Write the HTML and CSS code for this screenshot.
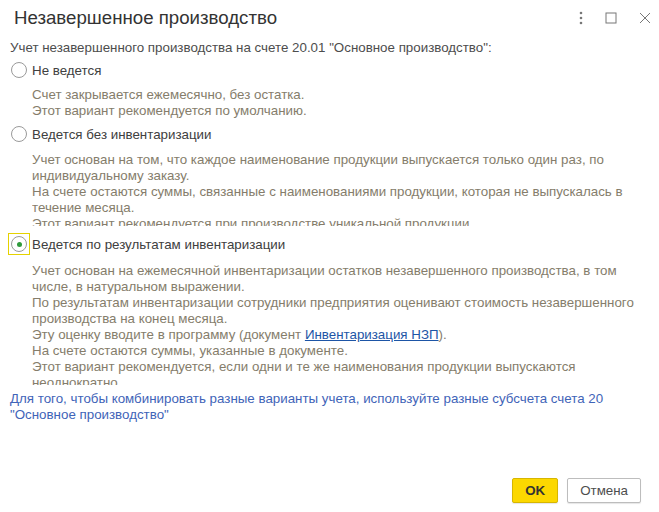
FILE: index.html
```html
<!DOCTYPE html>
<html lang="ru">
<head>
  <meta charset="UTF-8" />
  <title>Незавершенное производство</title>
  <link rel="stylesheet" href="styles.css">
</head>
<body>
  <div class="window">
    <div class="titlebar">
      <h1>Незавершенное производство</h1>
      <div class="win-buttons">
        <svg width="4" height="14" viewBox="0 0 4 14"><circle cx="2" cy="2" r="1.3" fill="#777"/><circle cx="2" cy="7" r="1.3" fill="#777"/><circle cx="2" cy="12" r="1.3" fill="#777"/></svg>
        <svg width="12" height="12" viewBox="0 0 12 12"><rect x="1" y="1" width="10" height="10" fill="none" stroke="#777" stroke-width="1"/></svg>
        <svg width="12" height="12" viewBox="0 0 12 12"><path d="M1 1L11 11M11 1L1 11" stroke="#777" stroke-width="1"/></svg>
      </div>
    </div>

    <div class="content">
      <div class="intro">Учет незавершенного производства на счете 20.01 "Основное производство":</div>

      <div class="option">
        <span class="radio-box"><span class="radio"></span></span>
        <span class="option-label">Не ведется</span>
      </div>
      <div class="desc desc-short">
        Счет закрывается ежемесячно, без остатка.<br>
        Этот вариант рекомендуется по умолчанию.
      </div>

      <div class="option">
        <span class="radio-box"><span class="radio"></span></span>
        <span class="option-label">Ведется без инвентаризации</span>
      </div>
      <div class="desc desc-mid">
        Учет основан на том, что каждое наименование продукции выпускается только один раз, по индивидуальному заказу.<br>
        На счете остаются суммы, связанные с наименованиями продукции, которая не выпускалась в течение месяца.<br>
        Этот вариант рекомендуется при производстве уникальной продукции.
      </div>

      <div class="option">
        <span class="radio-box focused"><span class="radio checked"></span></span>
        <span class="option-label">Ведется по результатам инвентаризации</span>
      </div>
      <div class="desc desc-long">
        Учет основан на ежемесячной инвентаризации остатков незавершенного производства, в том числе, в натуральном выражении.<br>
        По результатам инвентаризации сотрудники предприятия оценивают стоимость незавершенного производства на конец месяца.<br>
        Эту оценку вводите в программу (документ <a href="#">Инвентаризация НЗП</a>).<br>
        На счете остаются суммы, указанные в документе.<br>
        Этот вариант рекомендуется, если одни и те же наименования продукции выпускаются неоднократно.
      </div>

      <div class="note">Для того, чтобы комбинировать разные варианты учета, используйте разные субсчета счета 20 "Основное производство"</div>
    </div>

    <div class="footer">
      <button class="btn btn-ok">OK</button>
      <button class="btn">Отмена</button>
    </div>
  </div>
</body>
</html>
```

FILE: styles.css
```css
html, body { margin: 0; padding: 0; background: #fff; }
body { font-family: "Liberation Sans", Arial, sans-serif; font-size: 13.33px; color: #4d4d4d; }
.window { width: 659px; height: 512px; display: flex; flex-direction: column; box-sizing: border-box; }

.titlebar { height: 36px; display: flex; align-items: center; justify-content: space-between; padding: 0 8px 0 14px; }
.titlebar h1 { margin: 0; font-size: 18.67px; font-weight: normal; color: #333; }
.win-buttons { display: flex; align-items: center; gap: 22px; }
.win-buttons svg { display: block; }

.content { padding: 0 14px 0 10px; flex: 1; }
.intro { line-height: 16px; padding-top: 4px; }

.option { display: flex; align-items: center; height: 22px; margin-top: 3px; }
.radio-box { width: 20px; height: 20px; display: flex; align-items: center; justify-content: center; margin-left: -2px; border: 1px solid transparent; }
.radio-box.focused { border-color: #e5d200; }
.radio { width: 14px; height: 14px; border: 1px solid #9a9a9a; border-radius: 50%; display: flex; align-items: center; justify-content: center; background: #fff; }
.radio.checked::after { content: ""; width: 5px; height: 5px; border-radius: 50%; background: #2f9b3d; }
.option-label { margin-left: 2px; color: #404040; }

.desc { margin: 6px 0 4px 22px; line-height: 16px; color: #857d6b; overflow: hidden; }
.desc-short { height: 32px; }
.desc-mid { height: 74px; margin-top: 7px; margin-bottom: 7px; }
.desc-long { height: 122px; margin-top: 8px; margin-bottom: 6px; }
.desc a { color: #1d55a6; text-decoration: underline; }

.note { line-height: 16px; color: #3f64b8; margin-top: 1px; }

.footer { display: flex; justify-content: flex-end; gap: 9px; padding: 0 18px 9px 0; }
.btn { font-family: "Liberation Sans", Arial, sans-serif; font-size: 13.33px; height: 25px; padding: 0 12px; background: #fff; border: 1px solid #bdbdbd; border-radius: 2px; color: #4d4d4d; box-shadow: 0 1px 1px rgba(0,0,0,0.1); }
.btn-ok { background: #fcd800; border-color: #d7b600; color: #333; font-weight: bold; min-width: 46px; margin-right: 0; }
```
